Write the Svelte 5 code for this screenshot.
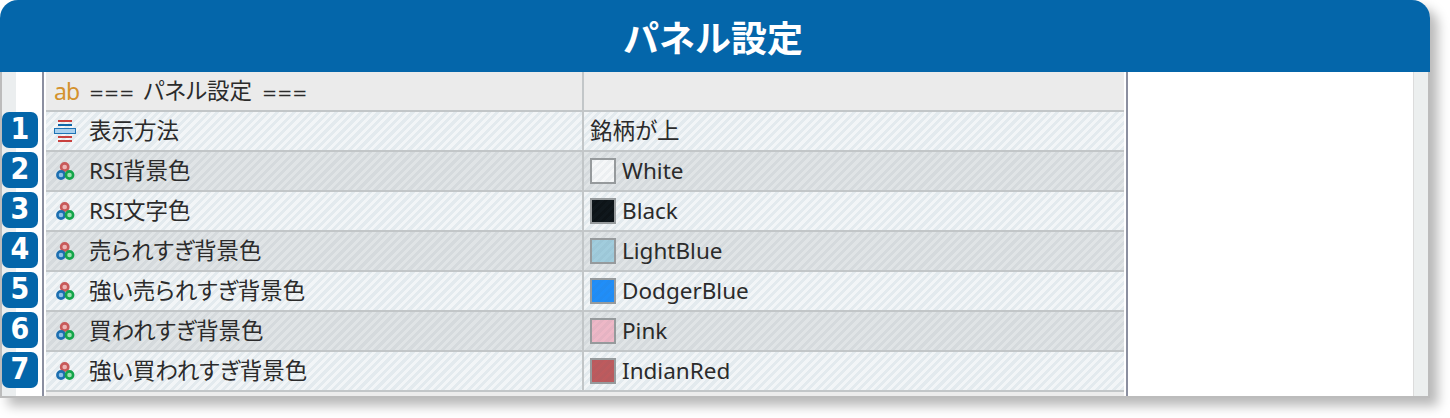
<script>
   const rows = [
      { label: "表示方法", value: "銘柄が上", icon: "list" },
      { label: "RSI背景色", value: "White", color: "#ffffff", icon: "color" },
      { label: "RSI文字色", value: "Black", color: "#0a0f12", icon: "color" },
      { label: "売られすぎ背景色", value: "LightBlue", color: "#a6d2e2", icon: "color" },
      { label: "強い売られすぎ背景色", value: "DodgerBlue", color: "#1e90ff", icon: "color" },
      { label: "買われすぎ背景色", value: "Pink", color: "#f7bccb", icon: "color" },
      { label: "強い買われすぎ背景色", value: "IndianRed", color: "#c45a5c", icon: "color" }
   ];
</script>

<div class="wrap">
   <div class="panel">
      <header class="title">パネル設定</header>
      <div class="body">
         <div class="gutter">
            {#each rows as row, i}
               <span class="badge">{i + 1}</span>
            {/each}
         </div>
         <div class="table">
            <div class="row head">
               <div class="cell name">
                  <span class="ab">ab</span>
                  <span class="group"><span class="eq">===</span>パネル設定<span class="eq end">===</span></span>
               </div>
               <div class="cell val"></div>
            </div>
            {#each rows as row, i}
               <div class="row" class:dark={i % 2 === 1}>
                  <div class="cell name">
                     {#if row.icon === "list"}
                        <svg class="icon" viewBox="0 0 22 24" width="22" height="24">
                           <rect x="4" y="1" width="14" height="2" fill="#c8413f" />
                           <rect x="4" y="5" width="14" height="2" fill="#0f66a8" />
                           <rect x="0.5" y="9.5" width="21" height="5" fill="#a9d0ee" stroke="#1f73b5" />
                           <rect x="4" y="17" width="14" height="2" fill="#c8413f" />
                           <rect x="4" y="21" width="14" height="2" fill="#c8413f" />
                        </svg>
                     {:else}
                        <svg class="icon" viewBox="0 0 22 24" width="22" height="24">
                           <circle cx="10.7" cy="8" r="3.6" fill="#eeb6b6" stroke="#c85a5a" stroke-width="2.6" />
                           <circle cx="7" cy="16" r="3.6" fill="#8fc0e8" stroke="#1c6fb0" stroke-width="2.6" />
                           <circle cx="15.5" cy="16" r="3.6" fill="#9fe0b0" stroke="#14a54a" stroke-width="2.6" />
                        </svg>
                     {/if}
                     <span>{row.label}</span>
                  </div>
                  <div class="cell val">
                     {#if row.color}
                        <span class="swatch" style="background-color: {row.color}"></span>
                     {/if}
                     <span>{row.value}</span>
                  </div>
               </div>
            {/each}
            <div class="tail"></div>
         </div>
         <div class="blank"></div>
         <div class="scroll"></div>
      </div>
   </div>
</div>

<style>
:global(body) {
   margin: 0;
   background: #fff;
}
.wrap {
   width: 1450px;
   height: 418px;
   overflow: hidden;
}
.panel {
   width: 1430px;
   height: 398px;
   box-sizing: border-box;
   display: flex;
   flex-direction: column;
   border-radius: 18px 18px 0 0;
   box-shadow: 8px 8px 12px rgba(0, 0, 0, 0.28);
   background: #fff;
}
.title {
   height: 72px;
   flex: none;
   box-sizing: border-box;
   padding-right: 4px;
   display: flex;
   align-items: center;
   justify-content: center;
   background: #0466aa;
   color: #fff;
   font: 700 36px/1 "Noto Sans CJK JP", sans-serif;
   border-radius: 18px 18px 0 0;
}
.body {
   flex: 1;
   display: flex;
   min-height: 0;
   border: 2px solid #bcbcbc;
   border-top: none;
}
.gutter {
   width: 42px;
   flex: none;
   display: flex;
   flex-direction: column;
   gap: 4px;
   padding-top: 40px;
   box-sizing: border-box;
   background: linear-gradient(to right, #ebeeef 14px, #fff 14px);
   border-right: 2px solid #8b8fa0;
}
.badge {
   width: 36px;
   height: 36px;
   flex: none;
   box-sizing: border-box;
   padding-bottom: 2px;
   border-radius: 7px;
   background: #0466aa;
   color: #fff;
   display: flex;
   align-items: center;
   justify-content: center;
   font: 700 30px/1 "DejaVu Sans", sans-serif;
   font-stretch: condensed;
}
.table {
   width: 1078px;
   flex: none;
   margin-left: 2px;
   display: flex;
   flex-direction: column;
   font: 400 22.5px/1 "Noto Sans", "Noto Sans CJK JP", sans-serif;
   color: #2b2b2b;
   font-feature-settings: "palt";
}
.row {
   height: 40px;
   flex: none;
   box-sizing: border-box;
   display: flex;
   border-bottom: 2px solid #c2c6c8;
   background: repeating-linear-gradient(135deg, #e3eaee 0 3px, #f2f5f7 3px 6px);
}
.row.dark {
   background: repeating-linear-gradient(135deg, #d5dadd 0 3px, #e0e4e6 3px 6px);
}
.row.head {
   background: #ebebeb;
}
.cell {
   display: flex;
   align-items: center;
   box-sizing: border-box;
}
.name {
   width: 538px;
   padding-left: 8px;
   gap: 13px;
   border-right: 2px solid #c2c6c8;
}
.val {
   flex: 1;
   padding-left: 6px;
   gap: 6px;
}
.ab {
   width: 22px;
   color: #d4922e;
   font-size: 23px;
   letter-spacing: -1px;
}
.eq {
   font-family: "DejaVu Sans", sans-serif;
   font-size: 18px;
   margin-right: 9px;
}
.eq.end {
   margin-right: 0;
   margin-left: 10px;
}
.icon {
   flex: none;
}
.swatch {
   width: 26px;
   height: 26px;
   box-sizing: border-box;
   flex: none;
   border: 2px solid #969a9c;
   background-image: repeating-linear-gradient(135deg, rgba(70, 100, 120, 0.1) 0 3px, rgba(70, 100, 120, 0.05) 3px 6px);
}
.tail {
   flex: 1;
   background: #ececec;
}
.blank {
   flex: 1;
   background: #fff;
   margin-left: 2px;
   border-left: 2px solid #8b8fa0;
}
.scroll {
   width: 15px;
   flex: none;
   background: #ecefef;
   border-left: 1px solid #dcdcdc;
   box-sizing: border-box;
}
</style>
